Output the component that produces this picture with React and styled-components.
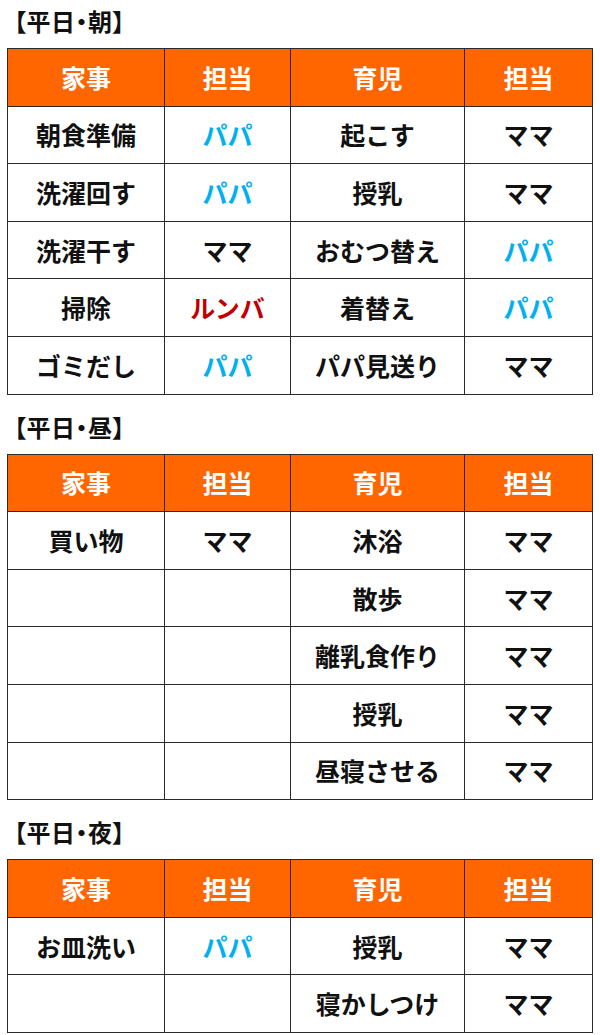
import styled, { createGlobalStyle } from 'styled-components';

const GlobalStyle = createGlobalStyle`
	html, body {
		margin: 0;
		padding: 0;
		background: #ffffff;
	}
	body {
		font-family: 'Noto Sans CJK JP', 'Noto Sans', sans-serif;
		color: #111111;
	}
`;

const Page = styled.div`
	display: flex;
	flex-direction: column;
	gap: 15px;
	width: 585px;
	padding: 4px 0 0 7px;
`;

const Section = styled.section`
	display: flex;
	flex-direction: column;
`;

const Title = styled.h2`
	margin: 0 0 10px 7px;
	font-size: 24px;
	line-height: 34px;
	font-weight: 700;
	font-feature-settings: 'palt';
	letter-spacing: 0.5px;
	color: #111111;
`;

const Table = styled.table`
	width: 585px;
	border-collapse: collapse;
	table-layout: fixed;
`;

const HeadCell = styled.th`
	height: 56.6px;
	padding: 0;
	background: #ff6600;
	border: 1px solid #2a2a2a;
	color: #ffffff;
	font-size: 25px;
	font-weight: 700;
	line-height: 1;
	text-align: center;
	vertical-align: middle;
`;

const Cell = styled.td`
	height: 56.6px;
	padding: 0;
	border: 1px solid #2a2a2a;
	font-size: 25px;
	font-weight: 700;
	line-height: 1;
	text-align: center;
	vertical-align: middle;
	color: ${(props) =>
		props.who === 'パパ' ? '#00b0f0' : props.who === 'ルンバ' ? '#c00000' : '#111111'};
`;

const sections = [
	{
		title: '【平日・朝】',
		rows: [
			['朝食準備', 'パパ', '起こす', 'ママ'],
			['洗濯回す', 'パパ', '授乳', 'ママ'],
			['洗濯干す', 'ママ', 'おむつ替え', 'パパ'],
			['掃除', 'ルンバ', '着替え', 'パパ'],
			['ゴミだし', 'パパ', 'パパ見送り', 'ママ'],
		],
	},
	{
		title: '【平日・昼】',
		rows: [
			['買い物', 'ママ', '沐浴', 'ママ'],
			['', '', '散歩', 'ママ'],
			['', '', '離乳食作り', 'ママ'],
			['', '', '授乳', 'ママ'],
			['', '', '昼寝させる', 'ママ'],
		],
	},
	{
		title: '【平日・夜】',
		rows: [
			['お皿洗い', 'パパ', '授乳', 'ママ'],
			['', '', '寝かしつけ', 'ママ'],
		],
	},
];

const widths = [157, 126, 174, 128];
const heads = ['家事', '担当', '育児', '担当'];

function App() {
	return (
		<>
			<GlobalStyle />
			<Page>
				{sections.map((s) => (
					<Section key={s.title}>
						<Title>{s.title}</Title>
						<Table>
							<colgroup>
								{widths.map((w, i) => (
									<col key={i} style={{ width: w }} />
								))}
							</colgroup>
							<thead>
								<tr>
									{heads.map((h, i) => (
										<HeadCell key={i}>{h}</HeadCell>
									))}
								</tr>
							</thead>
							<tbody>
								{s.rows.map((r, ri) => (
									<tr key={ri}>
										<Cell>{r[0]}</Cell>
										<Cell who={r[1]}>{r[1]}</Cell>
										<Cell>{r[2]}</Cell>
										<Cell who={r[3]}>{r[3]}</Cell>
									</tr>
								))}
							</tbody>
						</Table>
					</Section>
				))}
			</Page>
		</>
	);
}

export default App;
